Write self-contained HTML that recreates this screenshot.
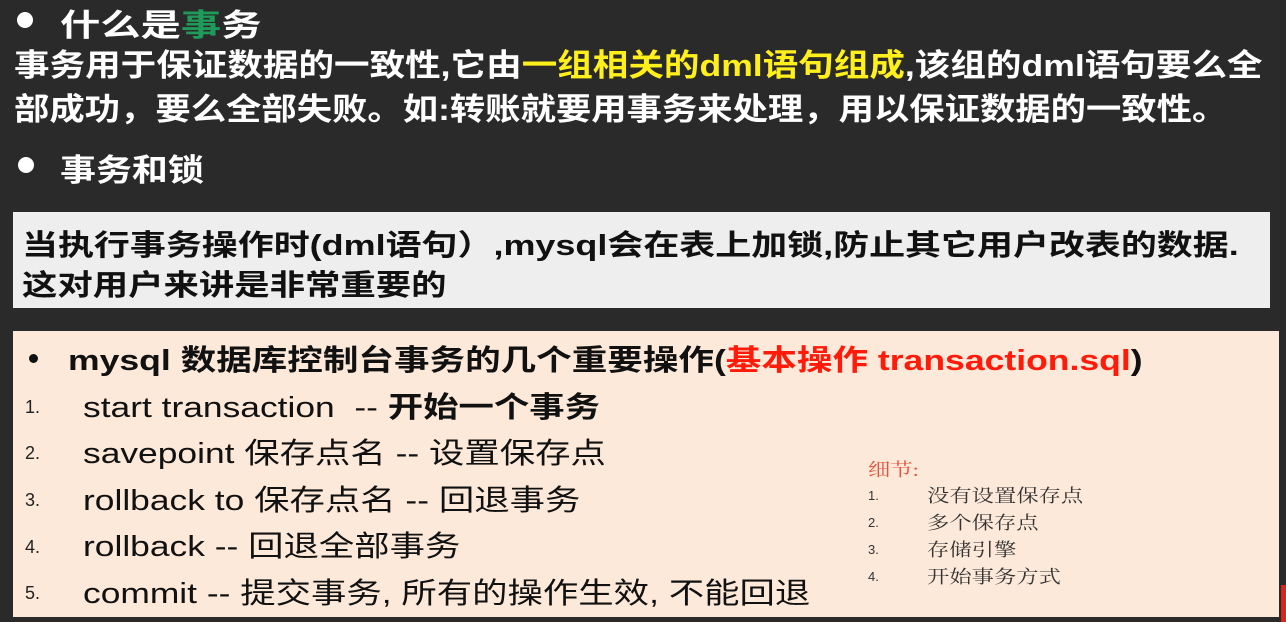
<!DOCTYPE html>
<html><head><meta charset="utf-8"><style>
body{margin:0;width:1286px;height:622px;background:#2a2a2a;position:relative;overflow:hidden;font-family:"Liberation Sans","Noto Sans CJK SC",sans-serif;}
.a{position:absolute;white-space:nowrap;transform-origin:0 0;}
.w{color:#fff;font-weight:bold;}
.dot{position:absolute;width:16px;height:16px;border-radius:50%;background:#fff;}
.gray{position:absolute;left:13px;top:212px;width:1257px;height:96px;background:#eeeeee;}
.peach{position:absolute;left:13px;top:331px;width:1266px;height:286px;background:#fde9d9;}
.n{position:absolute;left:25px;font-size:18px;color:#222;}
.it{position:absolute;left:83px;font-size:29px;color:#111;white-space:nowrap;transform:scaleX(1.22);transform-origin:0 0;}
.s{position:absolute;font-size:18px;color:#333;font-family:"Liberation Serif","Noto Serif CJK SC",serif;white-space:nowrap;transform:scaleX(1.24);transform-origin:0 0;}
.sn{position:absolute;left:868px;font-size:13px;color:#333;}
</style></head><body>
<div class="dot" style="left:17px;top:12px"></div>
<div class="a w" style="left:60px;top:0px;font-size:31px;transform:scaleX(1.3)">什么是<span style="color:#1f9a5a">事</span>务</div>
<div class="a w" style="left:14px;top:40px;font-size:31px;transform:scaleX(1.147)">事务用于保证数据的一致性,它由<span style="color:#ffef1a">一组相关的dml语句组成</span>,该组的dml语句要么全</div>
<div class="a w" style="left:14px;top:84px;font-size:31px;transform:scaleX(1.14)">部成功，要么全部失败。如:转账就要用事务来处理，用以保证数据的一致性。</div>
<div class="dot" style="left:18px;top:157px"></div>
<div class="a w" style="left:60px;top:145px;font-size:31px;transform:scaleX(1.16)">事务和锁</div>
<div class="gray"></div>
<div class="a" style="left:22px;top:222px;font-size:29px;font-weight:bold;color:#111;transform:scaleX(1.24)">当执行事务操作时(dml语句）,mysql会在表上加锁,防止其它用户改表的数据.</div>
<div class="a" style="left:22px;top:262px;font-size:29px;font-weight:bold;color:#111;transform:scaleX(1.22)">这对用户来讲是非常重要的</div>
<div class="peach"></div>
<div style="position:absolute;left:29px;top:354px;width:9px;height:9px;border-radius:50%;background:#111"></div>
<div class="a" style="left:68px;top:337px;font-size:29px;font-weight:bold;color:#111;transform:scaleX(1.226)">mysql 数据库控制台事务的几个重要操作(<span style="color:#ff1a0a">基本操作 transaction.sql</span>)</div>
<div class="n" style="top:397px">1.</div><div class="it" style="top:384px">start transaction&nbsp; -- <b>开始一个事务</b></div>
<div class="n" style="top:443px">2.</div><div class="it" style="top:430px">savepoint 保存点名 -- 设置保存点</div>
<div class="n" style="top:490px">3.</div><div class="it" style="top:477px">rollback to 保存点名 -- 回退事务</div>
<div class="n" style="top:537px">4.</div><div class="it" style="top:523px">rollback -- 回退全部事务</div>
<div class="n" style="top:583px">5.</div><div class="it" style="top:570px">commit -- 提交事务, 所有的操作生效, 不能回退</div>
<div class="s" style="left:868px;top:456px;color:#e8503a">细节:</div>
<div class="sn" style="top:488px">1.</div><div class="s" style="left:927px;top:482px">没有设置保存点</div>
<div class="sn" style="top:515px">2.</div><div class="s" style="left:927px;top:509px">多个保存点</div>
<div class="sn" style="top:542px">3.</div><div class="s" style="left:927px;top:536px">存储引擎</div>
<div class="sn" style="top:569px">4.</div><div class="s" style="left:927px;top:563px">开始事务方式</div>
<div style="position:absolute;left:1281px;top:585px;width:5px;height:37px;background:#d8261c"></div>
</body></html>
